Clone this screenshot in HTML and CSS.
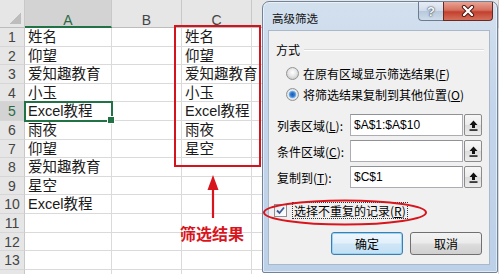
FILE: index.html
```html
<!DOCTYPE html>
<html lang="zh-CN">
<head>
<meta charset="utf-8">
<title>高级筛选</title>
<link rel="stylesheet" href="styles.css">
</head>
<body>
<div class="screen">
  <div class="sheet">
    <div class="corner"></div>
    <div class="colh sel">A</div>
    <div class="colh">B</div>
    <div class="colh">C</div>
    <div class="colh"></div>

    <div class="rowh">1</div><div class="cell">姓名</div><div class="cell"></div><div class="cell">姓名</div><div class="cell"></div>
    <div class="rowh">2</div><div class="cell">仰望</div><div class="cell"></div><div class="cell">仰望</div><div class="cell"></div>
    <div class="rowh">3</div><div class="cell">爱知趣教育</div><div class="cell"></div><div class="cell">爱知趣教育</div><div class="cell"></div>
    <div class="rowh">4</div><div class="cell">小玉</div><div class="cell"></div><div class="cell">小玉</div><div class="cell"></div>
    <div class="rowh sel">5</div><div class="cell active">Excel教程</div><div class="cell"></div><div class="cell">Excel教程</div><div class="cell"></div>
    <div class="rowh">6</div><div class="cell">雨夜</div><div class="cell"></div><div class="cell">雨夜</div><div class="cell"></div>
    <div class="rowh">7</div><div class="cell">仰望</div><div class="cell"></div><div class="cell">星空</div><div class="cell"></div>
    <div class="rowh">8</div><div class="cell">爱知趣教育</div><div class="cell"></div><div class="cell"></div><div class="cell"></div>
    <div class="rowh">9</div><div class="cell">星空</div><div class="cell"></div><div class="cell"></div><div class="cell"></div>
    <div class="rowh">10</div><div class="cell">Excel教程</div><div class="cell"></div><div class="cell"></div><div class="cell"></div>
    <div class="rowh">11</div><div class="cell"></div><div class="cell"></div><div class="cell"></div><div class="cell"></div>
    <div class="rowh">12</div><div class="cell"></div><div class="cell"></div><div class="cell"></div><div class="cell"></div>
    <div class="rowh">13</div><div class="cell"></div><div class="cell"></div><div class="cell"></div><div class="cell"></div>
    <div class="rowh">14</div><div class="cell"></div><div class="cell"></div><div class="cell"></div><div class="cell"></div>
  </div>

  <div class="mark-box"></div>
  <svg class="mark-arrow" width="14" height="46" viewBox="0 0 14 46">
    <polygon points="7,1 1.5,16 12.5,16" fill="#d8151d"/>
    <line x1="7" y1="14" x2="7" y2="44" stroke="#d8151d" stroke-width="2.2"/>
  </svg>
  <div class="mark-text">筛选结果</div>

  <div class="dialog">
    <div class="titlebar">
      <span class="title">高级筛选</span>
      <div class="caption">
        <div class="cbtn help">?</div>
        <div class="cbtn close">
          <svg width="14" height="12" viewBox="0 0 14 12">
            <path d="M3 2 L11 10 M11 2 L3 10" stroke="#4a1610" stroke-width="4.2" stroke-linecap="round"/>
            <path d="M3 2 L11 10 M11 2 L3 10" stroke="#ffffff" stroke-width="2.4" stroke-linecap="round"/>
          </svg>
        </div>
      </div>
    </div>
    <div class="client">
      <div class="section"><span class="section-label">方式</span><span class="rule"></span></div>
      <div class="radio first"><span class="rb"></span><span>在原有区域显示筛选结果(<u>F</u>)</span></div>
      <div class="radio"><span class="rb on"></span><span>将筛选结果复制到其他位置(<u>O</u>)</span></div>

      <div class="field first"><span class="flabel">列表区域(<u>L</u>):</span><div class="input">$A$1:$A$10</div><div class="pick"><svg width="9" height="11" viewBox="0 0 9 11"><path d="M4.5 0.5 L8.5 5 H6 V8 H3 V5 H0.5 Z" fill="#111"/><rect x="0.5" y="9.3" width="8" height="1.5" fill="#111"/></svg></div></div>
      <div class="field"><span class="flabel">条件区域(<u>C</u>):</span><div class="input"></div><div class="pick"><svg width="9" height="11" viewBox="0 0 9 11"><path d="M4.5 0.5 L8.5 5 H6 V8 H3 V5 H0.5 Z" fill="#111"/><rect x="0.5" y="9.3" width="8" height="1.5" fill="#111"/></svg></div></div>
      <div class="field"><span class="flabel">复制到(<u>T</u>):</span><div class="input">$C$1</div><div class="pick"><svg width="9" height="11" viewBox="0 0 9 11"><path d="M4.5 0.5 L8.5 5 H6 V8 H3 V5 H0.5 Z" fill="#111"/><rect x="0.5" y="9.3" width="8" height="1.5" fill="#111"/></svg></div></div>

      <div class="check"><span class="cb"><svg width="11" height="11" viewBox="0 0 11 11"><path d="M2 5.5 L4.5 8 L9 2.5" stroke="#3b5a98" stroke-width="1.8" fill="none"/></svg></span><span class="focus">选择不重复的记录(<u>R</u>)</span></div>

      <div class="buttons"><div class="btn default">确定</div><div class="btn">取消</div></div>
    </div>
  </div>

  <svg class="mark-ellipse" width="170" height="30" viewBox="0 0 170 30">
    <ellipse cx="84" cy="14.5" rx="81" ry="12" fill="none" stroke="#d8151d" stroke-width="2"/>
  </svg>
</div>
</body>
</html>
```

FILE: styles.css
```css
* { box-sizing: border-box; margin: 0; padding: 0; }
html, body { width: 499px; height: 274px; overflow: hidden; background: #fff; }
body { font-family: "Liberation Sans", "Noto Sans CJK SC", sans-serif; }

.screen { position: relative; width: 499px; height: 274px; overflow: hidden; }

/* spreadsheet */
.sheet {
  display: grid;
  grid-template-columns: 25px 87px 70px 70px 1fr;
  grid-template-rows: 28px;
  grid-auto-rows: 18.6px;
}
.corner {
  background: linear-gradient(135deg, transparent 50%, #bdbdbd 50%) no-repeat right 3px bottom 3px / 11px 11px, #e6e6e6;
  border-right: 1px solid #c8c8c8;
  border-bottom: 1px solid #bcbcbc;
}
.colh {
  background: #e6e6e6;
  border-right: 1px solid #c8c8c8;
  border-bottom: 1px solid #bcbcbc;
  text-align: center;
  font-size: 14px;
  line-height: 18px;
  padding-top: 11px;
  color: #444;
}
.colh.sel {
  background: #d3d3d3;
  color: #2c6a45;
  border-bottom: 2px solid #217346;
}
.rowh {
  background: #e6e6e6;
  border-right: 1px solid #c8c8c8;
  border-bottom: 1px solid #d6d6d6;
  text-align: center;
  font-size: 14px;
  line-height: 18px;
  color: #444;
}
.rowh.sel { background: #d3d3d3; color: #2c6a45; }
.cell {
  border-right: 1px solid #dadada;
  border-bottom: 1px solid #dadada;
  font-size: 14.5px;
  line-height: 18px;
  padding-left: 3px;
  white-space: nowrap;
  color: #1a1a1a;
}
.cell.active {
  position: relative;
  z-index: 1;
  outline: 2px solid #217346;
  outline-offset: -1px;
}
.cell.active::after {
  content: "";
  position: absolute;
  right: -4px;
  bottom: -4px;
  width: 6px;
  height: 6px;
  background: #217346;
  border: 1px solid #fff;
}

/* annotations */
.mark-box {
  position: absolute;
  left: 174px;
  top: 25px;
  width: 87px;
  height: 142px;
  border: 2px solid #d3141c;
}
.mark-arrow { position: absolute; left: 206px; top: 174px; }
.mark-text {
  position: absolute;
  left: 180px;
  top: 224px;
  font-family: "Noto Sans CJK SC", sans-serif;
  font-weight: 700;
  font-size: 16px;
  line-height: 18px;
  color: #d8151d;
}
.mark-ellipse { position: absolute; left: 261px; top: 198px; }

/* dialog */
.dialog {
  position: absolute;
  left: 262px;
  top: 1px;
  width: 236px;
  height: 272px;
  border: 1px solid #6f849c;
  border-radius: 7px 7px 2px 2px;
  background: linear-gradient(180deg, #d3e0ee 0%, #c3d5ea 40%, #bcd0e7 100%);
  box-shadow: inset 0 0 0 1px rgba(255,255,255,0.55);
  display: flex;
  flex-direction: column;
  font-family: "Noto Sans CJK SC", "Liberation Sans", sans-serif;
  font-size: 12px;
  color: #000;
}
.titlebar {
  display: flex;
  justify-content: space-between;
  align-items: flex-start;
  height: 28px;
  flex: none;
}
.title {
  padding: 8px 0 0 9px;
  font-size: 11.5px;
  line-height: 16px;
  color: #111;
}
.caption { display: flex; margin-right: 4px; }
.cbtn {
  height: 19px;
  display: flex;
  align-items: center;
  justify-content: center;
  border: 1px solid #6b7c90;
  border-top: none;
}
.help {
  width: 25px;
  border-radius: 0 0 0 4px;
  border-right: none;
  background: linear-gradient(180deg, #e6edf5 0%, #d1dcea 48%, #b8c9dd 52%, #cfdcea 100%);
  font-family: "Liberation Sans", sans-serif;
  font-weight: 700;
  font-size: 13px;
  color: #f6f8fb;
  text-shadow: 0 0 2px #2f4054, 0 0 1px #2f4054;
}
.close {
  width: 50px;
  border-color: #6b2820;
  border-radius: 0 0 4px 0;
  background: linear-gradient(180deg, #e8a495 0%, #d66f5e 45%, #c2402e 55%, #d4705c 100%);
}
.client {
  flex: 1;
  margin: 0 7px 7px 5px;
  background: #f0f0f0;
  border: 1px solid #a9b8cb;
  display: flex;
  flex-direction: column;
}
.section {
  display: flex;
  align-items: center;
  margin-top: 11px;
  height: 16px;
  padding: 0 5px 0 7px;
}
.section-label { line-height: 16px; }
.rule {
  flex: 1;
  height: 0;
  margin-left: 4px;
  border-top: 1px solid #d9d9d9;
  border-bottom: 1px solid #ffffff;
}
.radio {
  display: flex;
  align-items: center;
  height: 21px;
  padding-left: 17px;
}
.radio.first { margin-top: 5px; }
.rb {
  width: 13px;
  height: 13px;
  margin-right: 4px;
  border-radius: 50%;
  border: 1px solid #939393;
  background: radial-gradient(circle at 50% 40%, #ffffff 0, #e6e6e6 4px, #d2d2d2 6px);
  flex: none;
}
.rb.on {
  background: radial-gradient(circle at 50% 50%, #1a5cae 0, #2f78cc 2px, #7fb6ec 3.5px, #e9eef4 4.2px, #d6d6d6 6px);
}
.field {
  display: flex;
  align-items: center;
  height: 22px;
  margin-top: 4px;
  padding-left: 8px;
}
.field.first { margin-top: 9px; }
.flabel { width: 73px; flex: none; white-space: nowrap; }
.input {
  width: 113px;
  height: 22px;
  border: 1px solid #abadb3;
  border-top-color: #8f9297;
  background: #fff;
  padding-left: 3px;
  line-height: 20px;
  font-family: "Liberation Sans", sans-serif;
  font-size: 12px;
  flex: none;
}
.pick {
  width: 18px;
  height: 22px;
  margin-left: 1px;
  border: 1px solid #8b8b8b;
  border-radius: 2px;
  background: linear-gradient(180deg, #f7f7f7 0%, #ececec 48%, #dcdcdc 52%, #ededed 100%);
  display: flex;
  align-items: center;
  justify-content: center;
  flex: none;
}
.check {
  display: flex;
  align-items: center;
  height: 18px;
  margin-top: 13px;
  padding-left: 5px;
}
.cb {
  width: 13px;
  height: 13px;
  border: 1px solid #8e8f8f;
  background: linear-gradient(135deg, #e9e9e9, #ffffff);
  display: flex;
  align-items: center;
  justify-content: center;
  margin-right: 5px;
  flex: none;
}
.focus {
  border: 1px dotted #333;
  padding: 0 1px;
  line-height: 15px;
  white-space: nowrap;
}
.buttons {
  display: flex;
  justify-content: flex-end;
  gap: 7px;
  margin-top: 13px;
  padding-right: 7px;
}
.btn {
  width: 72px;
  height: 23px;
  border: 1px solid #707070;
  border-radius: 3px;
  background: linear-gradient(180deg, #f3f3f3 0%, #ebebeb 48%, #dddddd 52%, #d0d0d0 100%);
  text-align: center;
  line-height: 21px;
}
.btn.default {
  border-color: #3c7fb1;
  box-shadow: inset 0 0 0 1px #9ad3f3;
  background: linear-gradient(180deg, #eef6fc 0%, #e2f0fa 48%, #cfe6f6 52%, #c4e0f4 100%);
}
```
